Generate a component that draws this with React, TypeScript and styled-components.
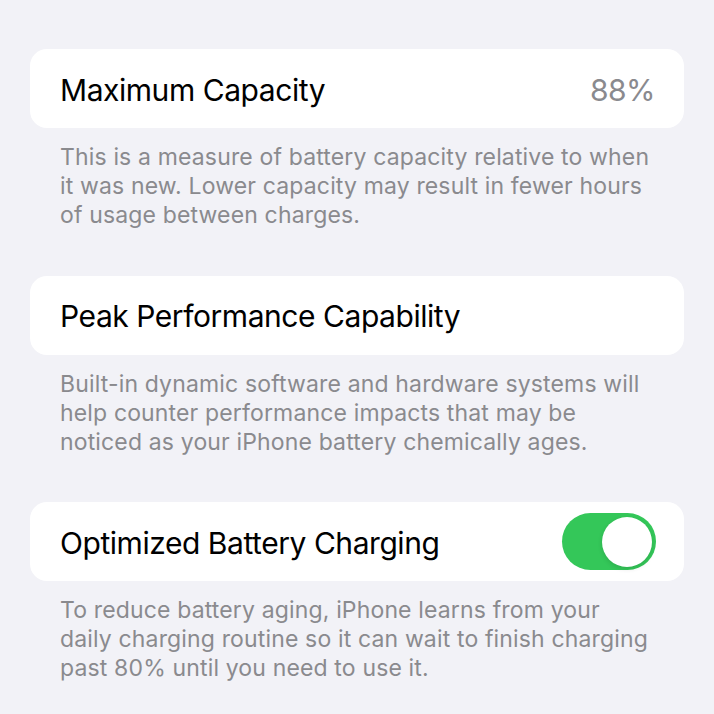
import styled, { createGlobalStyle } from "styled-components";

const GlobalStyle = createGlobalStyle`
  html, body {
    margin: 0;
    padding: 0;
    background: #f2f2f7;
  }
  body {
    font-family: Inter, "Noto Sans", "Liberation Sans", sans-serif;
    -webkit-font-smoothing: antialiased;
  }
`

const StyledPage = styled.div`
  width: 714px;
  height: 714px;
  overflow: hidden;
  box-sizing: border-box;
  padding: 49px 30px 0;
  display: flex;
  flex-direction: column;
  gap: 45.5px;
`
const StyledSection = styled.section`
  display: flex;
  flex-direction: column;
`
const StyledCard = styled.div`
  height: 79px;
  box-sizing: border-box;
  padding: 2px 29px 0 30px;
  background: #ffffff;
  border-radius: 17px;
  display: flex;
  align-items: center;
  justify-content: space-between;
`
const StyledLabel = styled.span`
  font-size: 30px;
  color: #000000;
  letter-spacing: -0.45px;
`
const StyledValue = styled.span`
  font-size: 30px;
  color: #8a8a8e;
  letter-spacing: -0.5px;
`
const StyledFooter = styled.p`
  margin: 15px 0 0;
  padding: 0 30px;
  font-size: 23px;
  line-height: 29px;
  color: #8a8a8e;
  letter-spacing: 0.15px;
  white-space: nowrap;
`
const StyledSwitch = styled.div<{ $on: boolean }>`
  width: 94px;
  height: 57px;
  border-radius: 29px;
  background: ${p => (p.$on ? "#34c759" : "#e9e9ea")};
  position: relative;
  margin: -2px -1px 0 0;
  flex-shrink: 0;
`
const StyledKnob = styled.div<{ $on: boolean }>`
  position: absolute;
  top: 3.5px;
  left: ${p => (p.$on ? "40px" : "3.5px")};
  width: 50px;
  height: 50px;
  border-radius: 50%;
  background: #ffffff;
  box-shadow: 0 2px 5px rgba(0, 0, 0, 0.12);
`

const Switch = ({ on }: { on: boolean }) => (
    <StyledSwitch $on={on}>
        <StyledKnob $on={on}/>
    </StyledSwitch>
)

export default function App() {
    return (
        <>
            <GlobalStyle/>
            <StyledPage>
                <StyledSection>
                    <StyledCard>
                        <StyledLabel>Maximum Capacity</StyledLabel>
                        <StyledValue>88%</StyledValue>
                    </StyledCard>
                    <StyledFooter>
                        This is a measure of battery capacity relative to when<br/>
                        it was new. Lower capacity may result in fewer hours<br/>
                        of usage between charges.
                    </StyledFooter>
                </StyledSection>
                <StyledSection>
                    <StyledCard>
                        <StyledLabel>Peak Performance Capability</StyledLabel>
                    </StyledCard>
                    <StyledFooter>
                        Built-in dynamic software and hardware systems will<br/>
                        help counter performance impacts that may be<br/>
                        noticed as your iPhone battery chemically ages.
                    </StyledFooter>
                </StyledSection>
                <StyledSection>
                    <StyledCard>
                        <StyledLabel>Optimized Battery Charging</StyledLabel>
                        <Switch on/>
                    </StyledCard>
                    <StyledFooter>
                        To reduce battery aging, iPhone learns from your<br/>
                        daily charging routine so it can wait to finish charging<br/>
                        past 80% until you need to use it.
                    </StyledFooter>
                </StyledSection>
            </StyledPage>
        </>
    )
}
